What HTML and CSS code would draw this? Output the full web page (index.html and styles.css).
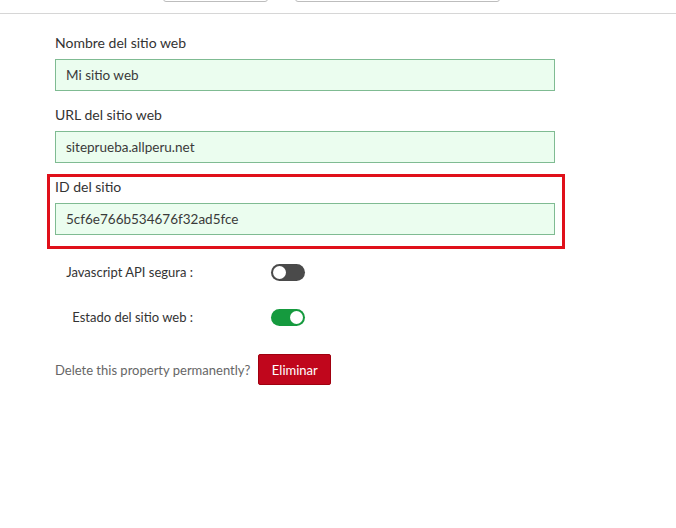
FILE: index.html
```html
<!DOCTYPE html>
<html lang="es">
<head>
<meta charset="utf-8">
<title>Configuración del sitio</title>
<link rel="stylesheet" href="styles.css">
</head>
<body>
<div class="topbar">
  <div class="tab tab-a"></div>
  <div class="tab tab-b"></div>
</div>
<main class="form">
  <div class="group">
    <label class="label">Nombre del sitio web</label>
    <div class="input">Mi sitio web</div>
  </div>
  <div class="group">
    <label class="label">URL del sitio web</label>
    <div class="input">siteprueba.allperu.net</div>
  </div>
  <div class="group highlight">
    <label class="label">ID del sitio</label>
    <div class="input">5cf6e766b534676f32ad5fce</div>
  </div>
  <div class="switch-row row-1">
    <span class="switch-label">Javascript API segura :</span>
    <span class="toggle off"><span class="knob"></span></span>
  </div>
  <div class="switch-row row-2">
    <span class="switch-label">Estado del sitio web :</span>
    <span class="toggle on"><span class="knob"></span></span>
  </div>
  <div class="delete-row">
    <span class="delete-text">Delete this property permanently?</span>
    <button class="btn-delete">Eliminar</button>
  </div>
</main>
</body>
</html>
```
FILE: styles.css
```css
* { box-sizing: border-box; }
html, body { margin: 0; padding: 0; background: #fff; }
body {
  font-family: Lato, "Open Sans", sans-serif;
  font-size: 14px;
  color: #333;
  width: 676px;
  height: 528px;
  overflow: hidden;
}
.topbar {
  height: 14px;
  border-bottom: 1px solid #d6d6d6;
  display: flex;
  overflow: hidden;
}
.tab {
  height: 30px;
  margin-top: -28px;
  border: 1px solid #bdbdbd;
  border-radius: 3px;
  background: #fff;
}
.tab-a { margin-left: 163px; width: 105px; }
.tab-b { margin-left: 27px; width: 205px; }

.form { padding-left: 55px; padding-top: 19px; }
.group { width: 500px; margin-bottom: 14px; }
.label {
  display: block;
  line-height: 20px;
  height: 20px;
  margin-bottom: 6px;
  color: #333;
}
.input {
  height: 32px;
  line-height: 30px;
  border: 1px solid #7fbb92;
  background: #ebfdef;
  padding-left: 10px;
  font-size: 13.5px;
  color: #3a3a3a;
}
.highlight {
  width: 518px;
  margin-left: -8px;
  margin-top: -3px;
  border: 3px solid #e0101a;
  padding: 0 7px 11px 5px;
  margin-bottom: 0;
}
.switch-row {
  display: flex;
  align-items: center;
  height: 20px;
  font-size: 13px;
}
.row-1 { margin-top: 13px; }
.row-2 { margin-top: 25px; }
.switch-label {
  width: 138px;
  text-align: right;
  color: #333;
}
.toggle {
  position: relative;
  margin-left: 78px;
  width: 34px;
  height: 17px;
  border-radius: 9px;
}
.toggle.off { background: #4a4a4a; }
.toggle.on { background: #159a3e; }
.knob {
  position: absolute;
  top: 2px;
  width: 13px;
  height: 13px;
  border-radius: 50%;
  background: #fff;
}
.toggle.off .knob { left: 2px; }
.toggle.on .knob { right: 2px; }
.delete-row {
  display: flex;
  align-items: center;
  margin-top: 27px;
  font-size: 13px;
}
.delete-text { color: #666; }
.btn-delete {
  margin-left: 8px;
  width: 73px;
  height: 31px;
  border: 1px solid #a0000f;
  border-radius: 2px;
  background: #c0061c;
  color: #fff;
  font-family: Lato, "Open Sans", sans-serif;
  font-size: 13px;
  padding: 0;
  cursor: pointer;
}
```
